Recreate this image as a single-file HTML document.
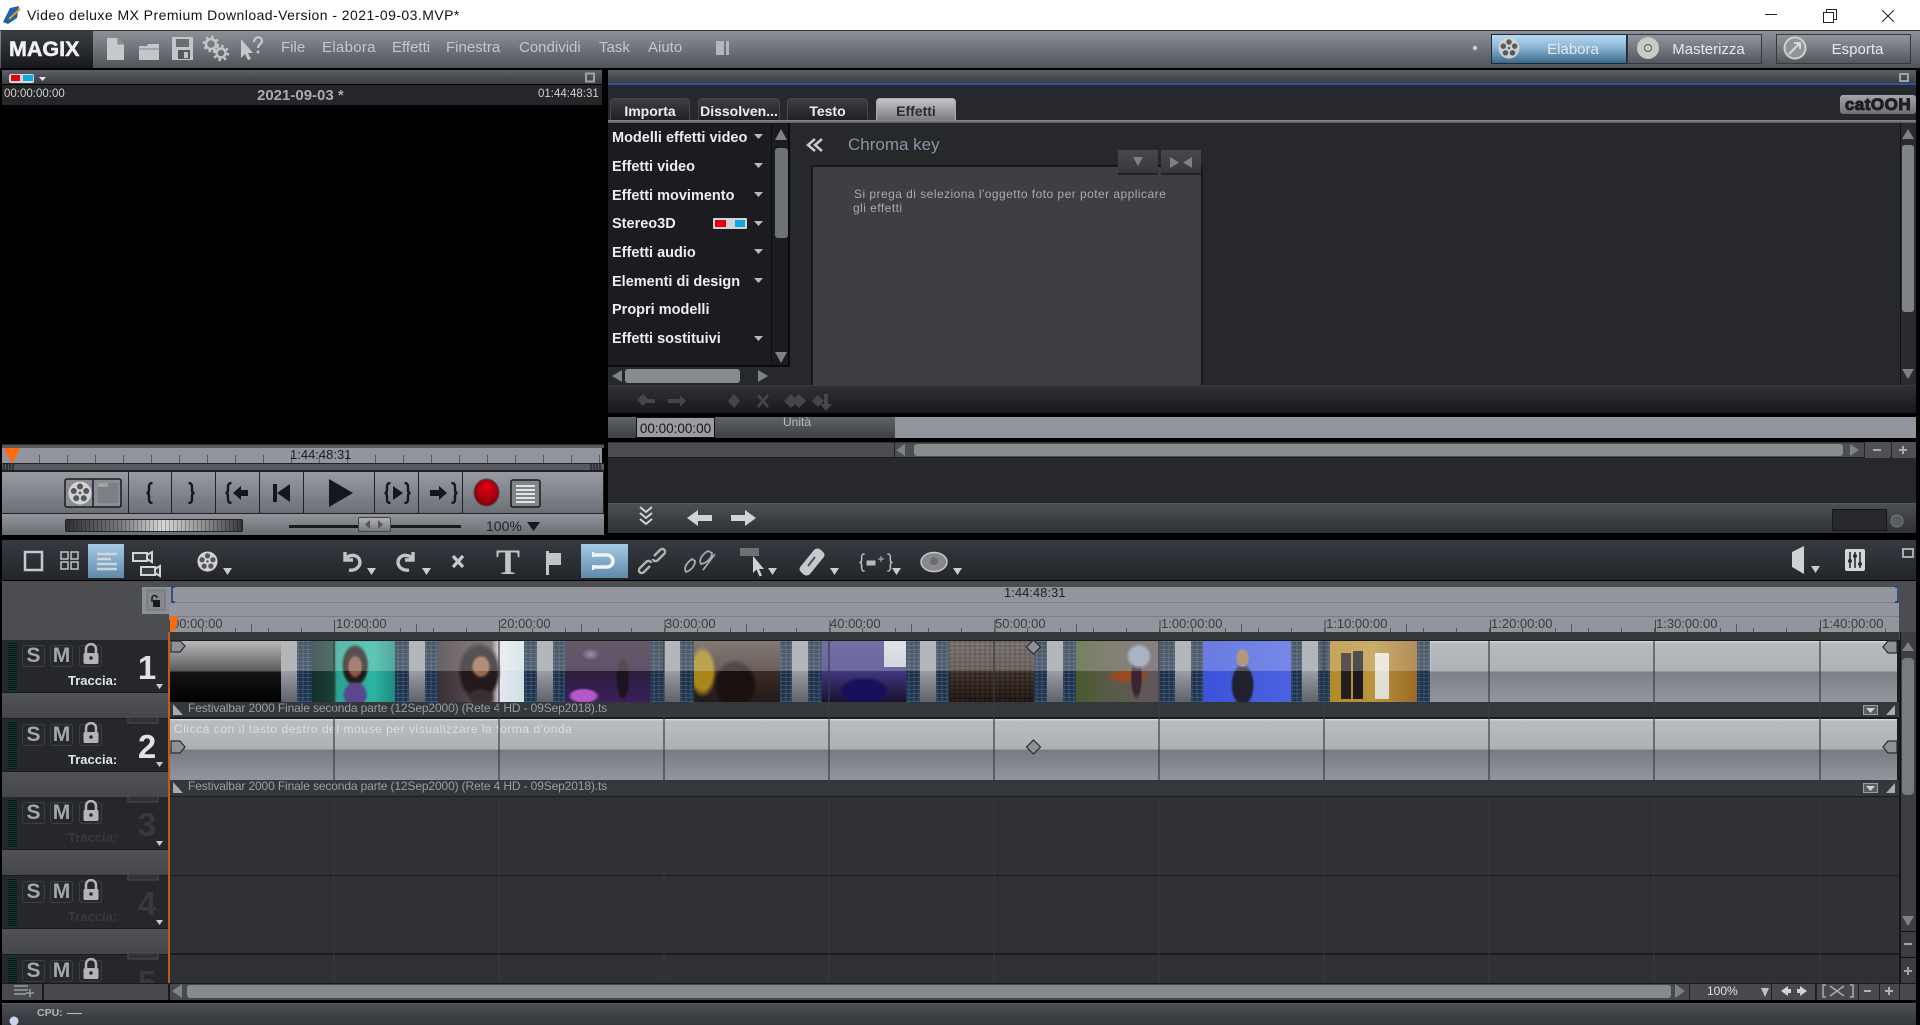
<!DOCTYPE html>
<html><head><meta charset="utf-8"><title>Video deluxe MX</title>
<style>
html,body{margin:0;padding:0;width:1920px;height:1025px;overflow:hidden;background:#000;font-family:"Liberation Sans",sans-serif}
div{position:absolute;white-space:nowrap;box-sizing:border-box}
svg{position:absolute;left:0;top:0}
.bar{background:linear-gradient(#5c5f65,#3a3c41)}
.tab{top:98px;height:22px;border-radius:4px 4px 0 0;background:linear-gradient(#3d3f44,#1f2024);color:#eceded;font-weight:bold;font-size:14px;line-height:25px;text-align:center;border:1px solid #44464b;border-bottom:0}
.li{left:612px;color:#eee;font-weight:bold;font-size:14.5px;line-height:18px;height:18px;margin-top:1px}
.mn{top:39px;color:#c3c7cb;font-size:15px;line-height:18px}
.tb{top:34px;height:30px;text-align:center;font-size:15px;line-height:30px;color:#e6e9ec;border:1px solid #35373b;background:linear-gradient(#92969c,#54585e)}
.ctl{top:472px;height:41px;background:linear-gradient(#989ba3,#6c6f75);border-right:1px solid #222}
.tm{top:616px;font-size:13px;line-height:16px;color:#3a3c40}
.band{top:0;height:61px;width:16px;background:linear-gradient(#9ea1a5,#9a9ea3 50%,#5d6268)}
.strip{top:0;height:61px;background:repeating-linear-gradient(rgba(130,170,190,.22) 0 1px,transparent 1px 4px),repeating-linear-gradient(90deg,rgba(170,120,170,.15) 0 2px,transparent 2px 5px),linear-gradient(#0e2436,#1a3046 50%,#1b3a54)}
.im{top:0;height:61px}
.hd{left:0;width:166px;height:78px}
.hb{left:0;top:0;width:166px;height:52px;background:#25272b}
.hs{left:0;top:53px;width:166px;height:25px;background:linear-gradient(#505256,#45474b)}
.mt{left:6px;top:2px;width:9px;height:49px;background:repeating-linear-gradient(#0d3a33 0 1px,#0b1413 1px 2px)}
.btn{top:5px;height:22px;width:23px;border:1px solid #3c3e42;border-radius:3px;background:#26282c;color:#a4a7aa;font-weight:bold;font-size:21px;line-height:20px;text-align:center}
.num{left:130px;top:10px;width:30px;text-align:center;font-weight:bold;font-size:33px;line-height:36px;color:#dfe1e4}
.trc{left:66px;top:33px;font-weight:bold;font-size:13px;line-height:16px;color:#dfe6e4}
.dim{color:#37393d}
.kf{background:#2f3135;left:169px;width:1730px}
</style></head>
<body>
<!-- title bar -->
<div style="left:0;top:0;width:1920px;height:30px;background:#fff"></div>
<div style="left:27px;top:6px;height:18px;font-size:14px;line-height:18px;color:#111;letter-spacing:.45px">Video deluxe MX Premium Download-Version - 2021-09-03.MVP*</div>
<!-- main toolbar -->
<div style="left:0;top:30px;width:1920px;height:38px;background:linear-gradient(#8c9097,#50545a);border-top:1px solid #333"></div>
<div style="left:1px;top:31px;width:92px;height:37px;background:linear-gradient(#3a3d42,#17191c)"></div>
<div style="left:9px;top:37px;font-weight:bold;font-size:21.5px;line-height:24px;color:#f2f2f2;-webkit-text-stroke:.5px #f2f2f2">MAGIX</div>
<div class="mn" style="left:281px">File</div>
<div class="mn" style="left:322px;letter-spacing:.3px">Elabora</div>
<div class="mn" style="left:392px">Effetti</div>
<div class="mn" style="left:446px">Finestra</div>
<div class="mn" style="left:519px">Condividi</div>
<div class="mn" style="left:599px">Task</div>
<div class="mn" style="left:648px">Aiuto</div>
<div class="tb" style="left:1491px;width:136px;background:linear-gradient(#b8daf4,#8ab4d4 45%,#3c6a8a);padding-left:28px;border-color:#1c2a36">Elabora</div>
<div class="tb" style="left:1627px;width:135px;padding-left:28px;color:#e6e9ec">Masterizza</div>
<div class="tb" style="left:1776px;width:135px;padding-left:28px">Esporta</div>
<!-- preview panel -->
<div class="bar" style="left:2px;top:70px;width:600px;height:14px"></div>
<div style="left:2px;top:85px;width:600px;height:20px;background:#24262a"></div>
<div style="left:4px;top:87px;font-size:11.5px;line-height:14px;color:#cfd0d2">00:00:00:00</div>
<div style="left:257px;top:88px;font-size:15px;font-weight:bold;line-height:16px;color:#a9abae">2021-09-03 *</div>
<div style="left:538px;top:87px;font-size:11.5px;line-height:14px;color:#cfd0d2">01:44:48:31</div>
<div style="left:2px;top:444px;width:602px;height:4px;background:#55585c;border-top:1px solid #2a2a2c"></div>
<div style="left:2px;top:448px;width:600px;height:15px;background:repeating-linear-gradient(90deg,transparent 0 27px,#55585e 27px 28px) 10px 7px/100% 8px no-repeat,#92959d"></div>
<div style="left:290px;top:447px;font-size:13px;line-height:16px;color:#1c1d20">1:44:48:31</div>
<div style="left:2px;top:463px;width:602px;height:8px;background:#55585d;border-top:1px solid #222;border-bottom:1px solid #222"></div>
<div style="left:2px;top:471px;width:602px;height:64px;background:#222"></div>
<div class="ctl" style="left:2px;width:127px"></div>
<div class="ctl" style="left:129px;width:43px"></div>
<div class="ctl" style="left:172px;width:44px"></div>
<div class="ctl" style="left:216px;width:44px"></div>
<div class="ctl" style="left:260px;width:44px"></div>
<div class="ctl" style="left:304px;width:71px"></div>
<div class="ctl" style="left:375px;width:44px"></div>
<div class="ctl" style="left:419px;width:44px"></div>
<div class="ctl" style="left:463px;width:141px"></div>
<div style="left:2px;top:514px;width:602px;height:21px;background:linear-gradient(#92959c,#6a6d73)"></div>
<div style="left:65px;top:519px;width:178px;height:13px;border:1px solid #222;border-radius:2px;background:repeating-linear-gradient(90deg,transparent 0 3px,rgba(0,0,0,.25) 3px 4px),linear-gradient(90deg,#303032,#77777a 30%,#d8d8d8 55%,#8a8a8c 80%,#38383a)"></div>
<div style="left:289px;top:525px;width:172px;height:3px;background:#1a1a1c"></div>
<div style="left:358px;top:517px;width:33px;height:15px;border-radius:2px;border:1px solid #444;background:linear-gradient(#b0b2b6,#77797e)"></div>
<div style="left:486px;top:518px;font-size:14px;line-height:16px;color:#202226">100%</div>
<!-- right panel -->
<div style="left:608px;top:70px;width:1308px;height:15px;background:linear-gradient(#5c5f65,#3c3e43);border-bottom:2px solid #2a56a8"></div>
<div style="left:608px;top:85px;width:1308px;height:300px;background:#26282c"></div>
<div class="tab" style="left:610px;width:80px">Importa</div>
<div class="tab" style="left:698px;width:82px">Dissolven...</div>
<div class="tab" style="left:787px;width:81px">Testo</div>
<div class="tab" style="left:876px;width:80px;background:linear-gradient(#c2c4c6,#7c7e82);color:#2a2c30;border-color:#aaa">Effetti</div>
<div style="left:608px;top:120px;width:1308px;height:3px;background:linear-gradient(#8b8d90,#55575a)"></div>
<div style="left:1840px;top:95px;width:76px;height:19px;border-radius:3px;background:linear-gradient(#a2a4a7,#6f7175);color:#1c1e22;font-weight:bold;font-size:17px;line-height:19px;text-align:center;letter-spacing:.5px;-webkit-text-stroke:1px #1c1e22">catOOH</div>
<div style="left:608px;top:123px;width:182px;height:244px;background:#1b1c20;border-right:2px solid #0c0c0e;border-bottom:2px solid #0c0c0e"></div>
<div style="left:771px;top:123px;width:1px;height:244px;background:#0c0c0e"></div>
<div class="li" style="top:128px">Modelli effetti video</div>
<div class="li" style="top:157px">Effetti video</div>
<div class="li" style="top:186px">Effetti movimento</div>
<div class="li" style="top:214px">Stereo3D</div>
<div class="li" style="top:243px">Effetti audio</div>
<div class="li" style="top:272px">Elementi di design</div>
<div class="li" style="top:300px">Propri modelli</div>
<div class="li" style="top:329px">Effetti sostituivi</div>
<div style="left:775px;top:148px;width:13px;height:90px;border-radius:3px;background:#6e7175"></div>
<div style="left:625px;top:369px;width:115px;height:14px;border-radius:3px;background:#888b90"></div>
<div style="left:848px;top:134px;font-size:17px;line-height:22px;color:#8a95a6">Chroma key</div>
<div style="left:811px;top:165px;width:392px;height:220px;background:#3d3f43;border:2px solid #17181b;border-bottom:0"></div>
<div style="left:1118px;top:150px;width:40px;height:25px;background:linear-gradient(#46484c,#36383c);border-bottom:2px solid #222"></div>
<div style="left:1161px;top:150px;width:40px;height:25px;background:linear-gradient(#46484c,#36383c);border-bottom:2px solid #222"></div>
<div style="left:854px;top:187px;font-size:12px;line-height:14px;color:#a9abad;letter-spacing:.46px">Si prega di seleziona l'oggetto foto per poter applicare</div>
<div style="left:853px;top:201px;font-size:12px;line-height:14px;color:#a9abad;letter-spacing:.46px">gli effetti</div>
<div style="left:1900px;top:123px;width:16px;height:262px;background:#2a2c30;border-left:1px solid #111"></div>
<div style="left:1902px;top:145px;width:12px;height:167px;border-radius:3px;background:#808388"></div>
<!-- lower right -->
<div style="left:608px;top:385px;width:1308px;height:28px;background:linear-gradient(#2f3135,#19191d);border-top:1px solid #3a3c40"></div>
<div style="left:608px;top:417px;width:287px;height:21px;background:linear-gradient(#606368,#3d3f44)"></div>
<div style="left:636px;top:417px;width:79px;height:21px;background:#9a9ca2;border:1px solid #111;color:#15161a;font-size:13.5px;line-height:22px;text-align:center">00:00:00:00</div>
<div style="left:783px;top:415px;font-size:12px;line-height:14px;color:#b9bbbd">Unità</div>
<div style="left:895px;top:417px;width:1021px;height:21px;background:#93959d"></div>
<div style="left:608px;top:442px;width:1308px;height:16px;background:#4b4d51;border-top:1px solid #333;border-bottom:1px solid #1c1c1e"></div>
<div style="left:894px;top:442px;width:1px;height:16px;background:#222"></div>
<div style="left:914px;top:444px;width:929px;height:12px;background:#878b8c;border-radius:3px"></div>
<div style="left:1864px;top:442px;width:26px;height:16px;background:#4e5054;border-left:1px solid #222"></div>
<div style="left:1891px;top:442px;width:25px;height:16px;background:#4e5054;border-left:1px solid #222"></div>
<div style="left:608px;top:458px;width:1308px;height:45px;background:#26282c"></div>
<div style="left:608px;top:503px;width:1308px;height:30px;background:linear-gradient(#4c4f54,#2e3034);border-top:1px solid #55585c"></div>
<div style="left:1832px;top:509px;width:55px;height:22px;background:#26282c;border:1px solid #17181a"></div>
<!-- timeline toolbar -->
<div style="left:2px;top:540px;width:1914px;height:40px;background:linear-gradient(#363a41,#23252a)"></div>
<div style="left:88px;top:544px;width:36px;height:34px;background:linear-gradient(#a4cae6,#5f8aa8)"></div>
<div style="left:581px;top:544px;width:47px;height:34px;background:linear-gradient(#a4cae6,#5f8aa8)"></div>
<!-- ruler -->
<div style="left:2px;top:581px;width:1914px;height:59px;background:#4b4d51"></div>
<div style="left:142px;top:587px;width:27px;height:27px;background:#8d9097"></div>
<div style="left:169px;top:587px;width:1730px;height:45px;background:#92959d"></div>
<div style="left:169px;top:602px;width:1730px;height:1px;background:#7c7f86"></div>
<div style="left:169px;top:616px;width:1730px;height:1px;background:#7c7f86"></div>
<div style="left:169px;top:628px;width:1730px;height:4px;background:repeating-linear-gradient(90deg,#54565b 0 1px,transparent 1px 33px)"></div>
<div style="left:251px;top:624px;width:1648px;height:8px;background:repeating-linear-gradient(90deg,#54565b 0 1px,transparent 1px 165px)"></div>
<div style="left:169px;top:620px;width:1730px;height:12px;background:repeating-linear-gradient(90deg,#44464a 0 1px,transparent 1px 165.1px)"></div>
<div style="left:169px;top:632px;width:1730px;height:8px;background:#35373b"></div>
<div style="left:1004px;top:585px;font-size:13px;line-height:16px;color:#1f2024">1:44:48:31</div>
<div class="tm" style="left:172px">00:00:00</div>
<div class="tm" style="left:336px">10:00:00</div>
<div class="tm" style="left:500px">20:00:00</div>
<div class="tm" style="left:665px">30:00:00</div>
<div class="tm" style="left:830px">40:00:00</div>
<div class="tm" style="left:995px">50:00:00</div>
<div class="tm" style="left:1161px">1:00:00:00</div>
<div class="tm" style="left:1326px">1:10:00:00</div>
<div class="tm" style="left:1491px">1:20:00:00</div>
<div class="tm" style="left:1656px">1:30:00:00</div>
<div class="tm" style="left:1822px">1:40:00:00</div>
<!-- tracks bg -->
<div style="left:2px;top:640px;width:1898px;height:343px;background:#1a1b1e"></div>
<div class="kf" style="top:797px;height:78px"></div>
<div class="kf" style="top:876px;height:77px"></div>
<div class="kf" style="top:955px;height:28px"></div>
<!-- headers -->
<div style="left:2px;top:640px;width:166px;height:343px;overflow:hidden">
 <div class="hd" style="top:0"><div class="hb"></div><div class="hs"></div><div class="mt"></div>
  <div class="btn" style="left:20px">S</div><div class="btn" style="left:48px">M</div><div class="btn" style="left:77px"></div>
  <div class="num">1</div><div class="trc">Traccia:</div></div>
 <div class="hd" style="top:79px"><div class="hb"></div><div class="hs"></div><div class="mt"></div>
  <div class="btn" style="left:20px">S</div><div class="btn" style="left:48px">M</div><div class="btn" style="left:77px"></div>
  <div class="num">2</div><div class="trc">Traccia:</div></div>
 <div class="hd" style="top:157px"><div class="hb"></div><div class="hs"></div><div class="mt"></div>
  <div class="btn" style="left:20px">S</div><div class="btn" style="left:48px">M</div><div class="btn" style="left:77px"></div>
  <div class="num dim">3</div><div class="trc dim">Traccia:</div></div>
 <div class="hd" style="top:236px"><div class="hb"></div><div class="hs"></div><div class="mt"></div>
  <div class="btn" style="left:20px">S</div><div class="btn" style="left:48px">M</div><div class="btn" style="left:77px"></div>
  <div class="num dim">4</div><div class="trc dim">Traccia:</div></div>
 <div class="hd" style="top:315px"><div class="hb"></div><div class="hs"></div><div class="mt"></div>
  <div class="btn" style="left:20px">S</div><div class="btn" style="left:48px">M</div><div class="btn" style="left:77px"></div>
  <div class="num dim">5</div></div>
</div>
<!-- clip 1 -->
<div style="left:169px;top:641px;width:1728px;height:61px;overflow:hidden;background:linear-gradient(#dfe1e3 0,#b7babf 2px,#aeb1b6 50%,#7d8187 50%,#92959b)">
 <div style="left:1px;top:0;width:111px;height:61px;background:linear-gradient(#b9b9b9,#5a5a5a 50%,#151515 50%,#000)"></div>
 <div class="band" style="left:112px"></div><div class="strip" style="left:128px;width:113px"></div>
 <div class="im" style="left:143px;width:83px;background:radial-gradient(ellipse 13px 14px at 52% 88%,#5c4690 75%,transparent),radial-gradient(ellipse 8px 12px at 52% 42%,#8a5a48 70%,transparent),radial-gradient(ellipse 14px 22px at 52% 40%,#241a18 80%,transparent),linear-gradient(90deg,#12302a,#1c4038 26%,#2aa492 30%,#2cb4a0 75%,#1e8a80)"></div>
 <div class="band" style="left:240px"></div><div class="strip" style="left:256px;width:113px"></div>
 <div class="im" style="left:269px;width:86px;background:radial-gradient(ellipse 10px 12px at 50% 42%,#9a6a50 70%,transparent),radial-gradient(ellipse 14px 9px at 50% 92%,#3a3030 70%,transparent),radial-gradient(ellipse 22px 30px at 48% 50%,#231a1c 80%,transparent),linear-gradient(90deg,#3a3036,#4c4248 28%,#5a5258 62%,#e4e8ee 72%,#cfe0e6)"></div>
 <div class="band" style="left:368px"></div><div class="strip" style="left:384px;width:113px"></div>
 <div class="im" style="left:396px;width:85px;background:radial-gradient(ellipse 7px 22px at 68% 62%,#1c141c 75%,transparent),radial-gradient(ellipse 16px 8px at 22% 90%,#b45ac8 70%,transparent),radial-gradient(ellipse 9px 6px at 30% 22%,#8a6a98,transparent),linear-gradient(#352638,#2c1e3c 50%,#3a1f5c)"></div>
 <div class="band" style="left:495px"></div><div class="strip" style="left:511px;width:113px"></div>
 <div class="im" style="left:525px;width:86px;background:radial-gradient(ellipse 22px 26px at 48% 72%,#19100f 78%,transparent),radial-gradient(ellipse 14px 26px at 10% 50%,#a8861c 70%,transparent),linear-gradient(#5e5048,#3a2c26 50%,#241a1a)"></div>
 <div class="band" style="left:623px"></div><div class="strip" style="left:639px;width:113px"></div>
 <div class="im" style="left:653px;width:84px;background:linear-gradient(#d8d8e4,#c8c8d8) 62px 0/22px 26px no-repeat,radial-gradient(ellipse 26px 14px at 50% 82%,#16105a 75%,transparent),linear-gradient(#44448a,#403780 50%,#1a1030)"></div>
 <div class="band" style="left:751px"></div><div class="strip" style="left:767px;width:113px"></div>
 <div class="im" style="left:780px;width:85px;background:repeating-linear-gradient(rgba(0,0,0,.22) 0 2px,transparent 2px 4px),repeating-linear-gradient(90deg,rgba(0,0,0,.2) 0 2px,transparent 2px 5px),linear-gradient(#5c524c,#4a3c34 50%,#2a1e18)"></div>
 <div class="band" style="left:878px"></div><div class="strip" style="left:894px;width:113px"></div>
 <div class="im" style="left:907px;width:84px;background:radial-gradient(circle 13px at 75% 25%,#8f9cb0 70%,transparent),radial-gradient(ellipse 6px 22px at 72% 60%,#3a2430 75%,transparent),radial-gradient(ellipse 22px 7px at 62% 58%,#9a4a22 70%,transparent),linear-gradient(90deg,#4a5a30,#5a5a48 40%,#62565c);"></div>
 <div class="band" style="left:1006px"></div><div class="strip" style="left:1022px;width:113px"></div>
 <div class="im" style="left:1034px;width:88px;background:radial-gradient(ellipse 7px 10px at 45% 28%,#9a7a50 75%,transparent),radial-gradient(ellipse 12px 22px at 45% 72%,#20202e 80%,transparent),linear-gradient(90deg,#3d52d8,#4a62e0)"></div>
 <div class="band" style="left:1133px"></div><div class="strip" style="left:1149px;width:112px"></div>
 <div class="im" style="left:1161px;width:87px;background:linear-gradient(#e8e4dc,#e0dcd0) 62% 12px/14px 46px no-repeat,linear-gradient(#1a181a,#1a181a) 30% 10px/10px 48px no-repeat,linear-gradient(#241e1c,#241e1c) 14% 12px/10px 46px no-repeat,linear-gradient(90deg,#b48a28,#b8953c 50%,#9a6a26)"></div>
 <div style="left:112px;top:0;width:1150px;height:30px;background:rgba(255,255,255,.24)"></div>
</div>
<div style="left:169px;top:702px;width:1730px;height:15px;background:#34373c"></div>
<div style="left:188px;top:701px;font-size:12px;line-height:15px;color:#9a9ea6;letter-spacing:-.13px">Festivalbar 2000 Finale seconda parte (12Sep2000) (Rete 4 HD - 09Sep2018).ts</div>
<!-- clip 2 -->
<div style="left:169px;top:719px;width:1728px;height:61px;background:linear-gradient(#dfe1e3 0,#b9bcc1 2px,#adb0b5 50%,#777b81 50%,#92959b)"></div>
<div style="left:174px;top:722px;font-size:12px;line-height:15px;color:#dcdee0;letter-spacing:.54px">Clicca con il tasto destro del mouse per visualizzare la forma d'onda</div>
<div style="left:169px;top:780px;width:1730px;height:16px;background:#34373c"></div>
<div style="left:188px;top:779px;font-size:12px;line-height:15px;color:#9a9ea6;letter-spacing:-.13px">Festivalbar 2000 Finale seconda parte (12Sep2000) (Rete 4 HD - 09Sep2018).ts</div>
<!-- orange playhead line -->
<div style="left:168px;top:632px;width:2px;height:351px;background:#c8571a"></div>
<!-- timeline side scrollbar -->
<div style="left:1900px;top:632px;width:16px;height:351px;background:#3c3e42;border-left:1px solid #111"></div>
<div style="left:1902px;top:658px;width:12px;height:137px;border-radius:4px;background:#787b80"></div>
<div style="left:1900px;top:931px;width:16px;height:1px;background:#111"></div>
<div style="left:1900px;top:957px;width:16px;height:1px;background:#111"></div>
<!-- bottom scrollbar -->
<div style="left:2px;top:983px;width:1914px;height:17px;background:#47494d;border-top:1px solid #1a1a1c"></div>
<div style="left:42px;top:983px;width:2px;height:17px;background:#1a1a1c"></div>
<div style="left:168px;top:983px;width:2px;height:17px;background:#1a1a1c"></div>
<div style="left:187px;top:985px;width:1484px;height:13px;border-radius:3px;background:#868a8d"></div>
<div style="left:1689px;top:983px;width:83px;height:17px;border-left:1px solid #222;border-right:1px solid #222;color:#e2e3e4;font-size:12px;line-height:17px;padding-left:17px">100%</div>
<div style="left:1815px;top:983px;width:2px;height:17px;background:#222"></div>
<div style="left:1858px;top:983px;width:1px;height:17px;background:#222"></div>
<div style="left:1879px;top:983px;width:1px;height:17px;background:#222"></div>
<div style="left:1899px;top:983px;width:1px;height:17px;background:#222"></div>
<!-- status bar -->
<div style="left:2px;top:1003px;width:1914px;height:22px;background:linear-gradient(#4a4d51,#33363a);border-top:1px solid #5a5c60"></div>
<div style="left:37px;top:1006px;font-size:10.5px;font-weight:bold;line-height:14px;color:#b4b6b8">CPU:</div>
<div style="left:67px;top:1013px;width:15px;height:1px;background:#bbb"></div>

<svg width="1920" height="1025" viewBox="0 0 1920 1025" xmlns="http://www.w3.org/2000/svg">
<defs>
<symbol id="reel" viewBox="0 0 24 24"><circle cx="12" cy="12" r="11.5" fill="#d3d3cf"/><circle cx="12" cy="5.5" r="3" fill="#55575a"/><circle cx="18.2" cy="10" r="3" fill="#55575a"/><circle cx="15.8" cy="17.3" r="3" fill="#55575a"/><circle cx="8.2" cy="17.3" r="3" fill="#55575a"/><circle cx="5.8" cy="10" r="3" fill="#55575a"/><circle cx="12" cy="12" r="1.4" fill="#55575a"/></symbol>
<symbol id="lock" viewBox="0 0 20 22"><path d="M5 10V6a5 5 0 0 1 10 0v4" fill="none" stroke="#b2b4b6" stroke-width="2.5"/><rect x="2.5" y="10" width="15" height="11" rx="1.5" fill="#b2b4b6"/><circle cx="10" cy="15" r="1.8" fill="#26282c"/></symbol>
<symbol id="bl" viewBox="0 0 8 22"><path d="M6.500 1C3.500 1 3 2.500 3 5v3c0 2-.8 3-2.500 3C2.200 11 3 12 3 14v3c0 2.500.5 4 3.500 4" fill="none" stroke="#14171c" stroke-width="2.400"/></symbol>
<symbol id="blw" viewBox="0 0 8 22"><path d="M6.500 1C3.500 1 3 2.500 3 5v3c0 2-.8 3-2.500 3C2.200 11 3 12 3 14v3c0 2.500.5 4 3.500 4" fill="none" stroke="#b8babc" stroke-width="1.800"/></symbol>
</defs>
<!-- window controls -->
<path d="M1765 14.500h12" stroke="#222" fill="none"/>
<path d="M1823.500 15.500h10v10h-10zM1826.500 15.500v-3h10v10h-3" stroke="#222" fill="none" transform="translate(0,-3)"/>
<path d="M1882 10l12 12M1894 10l-12 12" stroke="#222" fill="none"/>
<!-- app icon -->
<path d="M3 22L10 8l9-2-2 12-9 6z" fill="#1e62ac"/><path d="M9 19L20 9" stroke="#d8a020" stroke-width="2"/>
<!-- toolbar icons -->
<path d="M107 38h11l6 6v16h-17z" fill="#c6c8ca"/><path d="M118 38v6h6" fill="#8a8c90" stroke="#888"/>
<path d="M139 46h8l1-2h11v16h-20z" fill="#c4c6c8"/><path d="M139 49h20" stroke="#85878b"/>
<rect x="172" y="37" width="21" height="23" fill="#c2c4c6"/><rect x="176" y="39" width="13" height="8" fill="#6a6d72"/><rect x="178" y="50" width="12" height="9" fill="#55585c"/><rect x="184" y="52" width="4" height="6" fill="#c2c4c6"/>
<circle cx="211" cy="44" r="5" fill="none" stroke="#c2c4c6" stroke-width="2.500"/><circle cx="211" cy="44" r="7" fill="none" stroke="#c2c4c6" stroke-width="2.500" stroke-dasharray="2.500 3"/>
<circle cx="221" cy="53" r="4.500" fill="none" stroke="#c2c4c6" stroke-width="2.500"/><circle cx="221" cy="53" r="7" fill="none" stroke="#c2c4c6" stroke-width="2.500" stroke-dasharray="2.500 3"/>
<path d="M241 39v19l4-4 3 6 3-1-3-6h5z" fill="#c6c8ca"/>
<path d="M254 42c0-6 8-6 8-1 0 3-4 3-4 7" fill="none" stroke="#c6c8ca" stroke-width="2.200"/><circle cx="258" cy="52" r="1.400" fill="#c6c8ca"/>
<path d="M716 41h8v14h-8zM726 41h3v14h-3z" fill="#c0c3c6" opacity=".85"/>
<circle cx="1475" cy="48" r="2.200" fill="#cfd1d3"/>
<use href="#reel" x="1498" y="37" width="22" height="22" opacity=".95"/>
<circle cx="1648" cy="48" r="11" fill="#c9c9c5"/><circle cx="1648" cy="48" r="3.500" fill="none" stroke="#55575a"/>
<circle cx="1795" cy="48" r="10.500" fill="#909397" stroke="#cfd0d2" stroke-width="2"/><path d="M1789 54l11-11M1794 43h6v6" fill="none" stroke="#d8d9da" stroke-width="2"/>
<!-- preview -->
<rect x="9" y="74" width="25" height="9" rx="2" fill="#d6d6d6"/><rect x="11" y="75" width="9" height="6" fill="#e00010"/><rect x="23" y="75" width="10" height="6" fill="#10a8e0"/>
<path d="M39 77h7l-3.500 4z" fill="#e8e8e8"/>
<rect x="586" y="73.500" width="8" height="8" fill="none" stroke="#a0a3a6" stroke-width="2"/>
<path d="M4 448h16l-8 16z" fill="#ff6a0c"/>
<path d="M4 464v7M7 464v7M10 464v7M13 464v7M591 464v7M594 464v7M597 464v7M600 464v7" stroke="#111"/>
<!-- transport -->
<rect x="65" y="479" width="56" height="28" rx="2" fill="#8a8d93" stroke="#1a1b1e" stroke-width="1.500"/>
<use href="#reel" x="68" y="481" width="24" height="24"/>
<path d="M93 479v28" stroke="#1a1b1e" stroke-width="1.500"/>
<rect x="98" y="483" width="20" height="20" fill="#7c7f84"/><rect x="98" y="483" width="10" height="4" fill="#9fa2a6"/>
<use href="#bl" x="146" y="482" width="8" height="22"/>
<g transform="translate(195,482) scale(-1,1)"><use href="#bl" width="8" height="22"/></g>
<use href="#bl" x="225" y="482" width="8" height="22"/>
<use href="#bl" x="384" y="482" width="8" height="22"/>
<g transform="translate(411,482) scale(-1,1)"><use href="#bl" width="8" height="22"/></g>
<g transform="translate(458,482) scale(-1,1)"><use href="#bl" width="8" height="22"/></g>
<g fill="#14171c">
<path d="M233 493l8-7v4h7v6h-7v4z"/>
<path d="M273 484h4v18h-4zM290 484v18l-13-9z"/>
<path d="M329 479l24 14-24 14z"/>
<path d="M393 486l10 7-10 7z"/>
<path d="M447 493l-8-7v4h-9v6h9v4z"/>
<path d="M527 522h13l-6.500 9z"/>
</g>
<defs><radialGradient id="rec" cx=".5" cy=".35" r=".7"><stop offset="0" stop-color="#e00014"/><stop offset="1" stop-color="#7a0008"/></radialGradient></defs>
<ellipse cx="486.500" cy="492.500" rx="12.500" ry="13.500" fill="url(#rec)" stroke="#4a4a4a"/>
<rect x="511" y="480" width="29" height="27" rx="2" fill="#808389" stroke="#1a1b1e" stroke-width="1.500"/>
<path d="M516 486h19M516 490h19M516 494h19M516 498h19M516 502h19" stroke="#e2e3e4" stroke-width="2"/>
<path d="M370 520l-5 4.500 5 4.500zM378 520l5 4.500-5 4.500z" fill="#55575a"/>
<!-- effects list -->
<g fill="#b8babc">
<path d="M754 134h9l-4.500 5z"/><path d="M754 163h9l-4.500 5z"/><path d="M754 192h9l-4.500 5z"/><path d="M754 221h9l-4.500 5z"/><path d="M754 249h9l-4.500 5z"/><path d="M754 278h9l-4.500 5z"/><path d="M754 336h9l-4.500 5z"/>
</g>
<rect x="713" y="218" width="34" height="11" rx="1" fill="#d4d4d4"/><rect x="715" y="220" width="11" height="7" fill="#e00010"/><rect x="735" y="220" width="10" height="7" fill="#10a8e0"/>
<g fill="#7e8186">
<path d="M781 129l6 11h-12z"/><path d="M781 363l6-11h-12z"/>
<path d="M612 376l10-6v12z"/><path d="M768 376l-10-6v12z"/>
<path d="M1908 129l6 10h-12z"/><path d="M1908 379l6-10h-12z"/>
</g>
<path d="M815 139l-7 6 7 6M822 139l-7 6 7 6" fill="none" stroke="#c8cacc" stroke-width="2.500"/>
<path d="M1133 157h10l-5 9z" fill="#7d8085"/>
<path d="M1170 157l9 5.500-9 5.500zM1192 157l-9 5.500 9 5.500z" fill="#7d8085"/>
<!-- maximize -->
<rect x="1900" y="74" width="8" height="7" fill="none" stroke="#a0a3a6" stroke-width="2"/>
<!-- keyframe row -->
<g fill="#44464b">
<path d="M637 400l6-6 6 6-6 6z"/><path d="M645 399h10v4h-10z"/><path d="M668 399h12v4h-12zM680 395l6 6-6 6z"/>
<path d="M728 401l6-7 6 7-6 7z"/><path d="M757 396l4 5-4 5 2 2 4-5 4 5 2-2-4-5 4-5-2-2-4 5-4-5z"/>
<path d="M784 401l7-7 7 7-7 7z"/><path d="M792 401l7-7 7 7-7 7z"/><path d="M812 401l6-6 6 6-6 6z"/><path d="M824 394h4v10h4l-6 7-6-7h4z"/>
</g>
<path d="M905 444v12l-9-6z" fill="#7e8186"/><path d="M1860 444v12l-9-6z" fill="#7e8186" transform="rotate(180 1855 450)"/>
<path d="M1873 450h8" stroke="#a8aaac" stroke-width="2"/><path d="M1899 450h8M1903 446v8" stroke="#a8aaac" stroke-width="2"/>
<!-- bottom nav -->
<path d="M640 507l6 5 6-5M640 513l6 5 6-5M640 519l6 5 6-5" fill="none" stroke="#d2d3d4" stroke-width="2"/>
<path d="M687 518l11-8v5h14v6h-14v5z" fill="#d2d3d4"/><path d="M756 518l-11-8v5h-14v6h14v5z" fill="#d2d3d4"/>
<circle cx="1897" cy="521" r="6" fill="#5a5c60" stroke="#777" />
<!-- timeline toolbar icons -->
<rect x="25" y="552" width="17" height="18" fill="none" stroke="#c6c8ca" stroke-width="2.500"/>
<path d="M61 552h7v7h-7zM71 552h7v7h-7zM61 562h7v7h-7zM71 562h7v7h-7z" fill="none" stroke="#c0c2c4" stroke-width="1.500"/>
<path d="M97 554h20M97 559h14M97 564h20M97 569h20" stroke="#d8dadc" stroke-width="2.500" opacity=".9"/>
<path d="M133 553h14v8h-14zM147 555l5-3v10l-5-3zM141 567h14v8h-14zM155 569l5-3v10l-5-3z" fill="#3a3c40" stroke="#d0d2d4" stroke-width="2"/>
<use href="#reel" x="197" y="551" width="21" height="21"/>
<path d="M223 568h9l-4.500 7z M367 568h9l-4.500 7z M422 568h9l-4.500 7z M768 568h9l-4.500 7z M830 568h9l-4.500 7z M892 568h9l-4.500 7z M953 568h9l-4.500 7z M1811 566h9l-4.500 7z" fill="#c9cbcd"/>
<path d="M345 552v8h8M345 560c2-6 14-7 15 2 0 6-6 9-11 8" fill="none" stroke="#c2c4c6" stroke-width="3.400"/>
<path d="M413 552v8h-8M413 560c-2-6-14-7-15 2 0 6 6 9 11 8" fill="none" stroke="#c2c4c6" stroke-width="3.400"/>
<path d="M453 556l10 11M463 556l-10 11" stroke="#c6c8ca" stroke-width="3.200"/>
<text x="496" y="574" font-size="36" font-weight="bold" font-family="Liberation Serif,serif" fill="#c2c4c6">T</text>
<path d="M546 551h3v24h-3zM549 553h12v12h-12z" fill="#c2c4c6"/>
<path d="M593 555h14a6 6 0 0 1 0 12h-14" fill="none" stroke="#f0f2f4" stroke-width="3.500"/><path d="M593 552v5M593 565v5" stroke="#f0f2f4" stroke-width="2"/>
<path d="M650 566l-6 6c-3 3-7-1-4-4l6-6c2-2 5-1 5 1M654 556l6-6c3-3 7 1 4 4l-6 6c-2 2-5 1-5-1" fill="none" stroke="#b0b2b4" stroke-width="2.400"/>
<path d="M686 572c-3-5 2-10 6-13l3 2c0 4-3 9-9 11zM701 564c-3-5 3-11 7-13l4 2c0 5-5 10-11 11zM703 570l12-16" fill="none" stroke="#a8aaac" stroke-width="1.800"/>
<rect x="740" y="548" width="19" height="8" fill="#6e7074"/><path d="M753 556v17l3.500-3.500 3 7 2.500-1-3-6.500h5z" fill="#d0d2d4"/>
<path d="M801 566l13-16c2-2 5-2 7 0l2 2c2 2 2 4 0 6l-13 16c-2 2-5 2-7 0l-2-2c-2-2-2-4 0-6z" fill="#c6c8ca"/><path d="M808 566l7-9" stroke="#50525a" stroke-width="2"/>
<use href="#blw" x="859" y="553" width="7" height="19"/>
<path d="M867 561h8v4h-8zM878 559h6M881 556v6" stroke="#b8babc" fill="#b8babc"/>
<g transform="translate(893,553) scale(-1,1)"><use href="#blw" width="7" height="19"/></g>
<ellipse cx="934" cy="562" rx="13" ry="9.500" fill="#88898c" stroke="#c4c6c8" stroke-width="1.500"/><circle cx="934" cy="561" r="4" fill="#6a6c70"/>
<path d="M1792 552l12-6v28l-12-7z" fill="#cfd1d3"/>
<rect x="1845" y="549" width="20" height="22" rx="2" fill="#d4d5d6"/><path d="M1850 552v16M1855 552v16M1860 552v16" stroke="#2a2c30" stroke-width="1.600"/><circle cx="1850" cy="561" r="2" fill="#2a2c30"/><circle cx="1855" cy="556" r="2" fill="#2a2c30"/><circle cx="1860" cy="564" r="2" fill="#2a2c30"/>
<rect x="1903" y="549" width="10" height="8" fill="none" stroke="#a8aaac" stroke-width="2"/>
<!-- lock box -->
<rect x="147" y="590" width="18" height="20" fill="#85888e" stroke="#6e7176"/>
<path d="M152 602v-4a2.500 2.500 0 0 1 5 0" fill="none" stroke="#1a1b1e" stroke-width="1.500"/><rect x="153" y="600" width="7" height="7" fill="#1a1b1e"/>
<path d="M175 587h-3v15h3M1895 587h3v15h-3" fill="none" stroke="#1b3a7a" stroke-width="1.500"/>
<path d="M170 616h8l-3 15h-5z" fill="#ff6a0c"/>
<!-- track locks -->
<use href="#lock" x="81" y="643" width="20" height="22"/>
<use href="#lock" x="81" y="722" width="20" height="22"/>
<use href="#lock" x="81" y="800" width="20" height="22"/>
<use href="#lock" x="81" y="879" width="20" height="22"/>
<use href="#lock" x="81" y="958" width="20" height="22"/>
<path d="M156 684h7l-3.500 5zM156 762h7l-3.500 5zM156 841h7l-3.500 5zM156 920h7l-3.500 5z" fill="#c8cacc"/>
<path d="M128 717h30v6h-30zM128 796h30v6h-30zM128 874h30v6h-30zM128 953h30v6h-30z" fill="#303236" stroke="#4a4c50"/>
<!-- clip grid lines -->
<g stroke="#3a3c40" stroke-width="1.200">
<path d="M334 641v139M499 641v139M664 641v139M829 641v139M994 641v139M1159 641v139M1324 641v139M1489 641v139M1654 641v139M1820 641v139"/>
</g>
<g stroke="#38393e">
<path d="M334 797v186M499 797v186M664 797v186M829 797v186M994 797v186M1159 797v186M1324 797v186M1489 797v186M1654 797v186M1820 797v186"/>
</g>
<!-- markers -->
<g fill="#8d9097" stroke="#2a2c30" stroke-width="1.200">
<path d="M171 641h9l5 5-5 6h-9z"/><path d="M171 741h9l5 6-5 6h-9z"/>
<path d="M1897 641h-9l-5 6 5 6h9z"/><path d="M1897 741h-9l-5 6 5 6h9z"/>
<path d="M1033.500 640l7 7-7 7-7-7z"/><path d="M1033.500 740l7 7-7 7-7-7z"/>
</g>
<path d="M173 704l10 11h-10zM173 782l10 11h-10z" fill="#a8abb0"/>
<path d="M1895 705v10h-9zM1895 783v10h-9z" fill="#a8abb0"/>
<rect x="1863.500" y="705.500" width="14" height="9" fill="#5a5d62" stroke="#9a9da2"/><path d="M1866 708h9l-4.500 5z" fill="#cfd1d3"/>
<rect x="1863.500" y="783.500" width="14" height="9" fill="#5a5d62" stroke="#9a9da2"/><path d="M1866 786h9l-4.500 5z" fill="#cfd1d3"/>
<!-- timeline scrollbars -->
<g fill="#7e8186">
<path d="M1908 642l6 9h-12z"/><path d="M1908 926l6-10h-12z"/>
<path d="M172 991l10-7v14z"/><path d="M1685 991l-10-7v14z"/>
</g>
<path d="M1904 944h8M1904 971h8M1908 967v8" stroke="#a0a3a6" stroke-width="2"/>
<path d="M1761 988h8l-4 9z" fill="#c0c2c4"/>
<path d="M1781 991l7-5v3h3v4h-3v3zM1807 991l-7-5v3h-3v4h3v3z" fill="#d0d2d4"/>
<path d="M1826 985h-3v12h3M1850 985h3v12h-3M1830 986l14 10M1844 986l-14 10" fill="none" stroke="#a8aaac" stroke-width="1.500"/>
<path d="M1864 991h7M1885 991h8M1889 987v8" stroke="#b0b2b4" stroke-width="2"/>
<path d="M14 986h14M14 990h14M14 994h12M26 993h8M30 989v8" stroke="#8e9195" stroke-width="1.800"/>
<circle cx="14" cy="1021" r="4.500" fill="#c8d8e8"/>
</svg>
</body></html>
